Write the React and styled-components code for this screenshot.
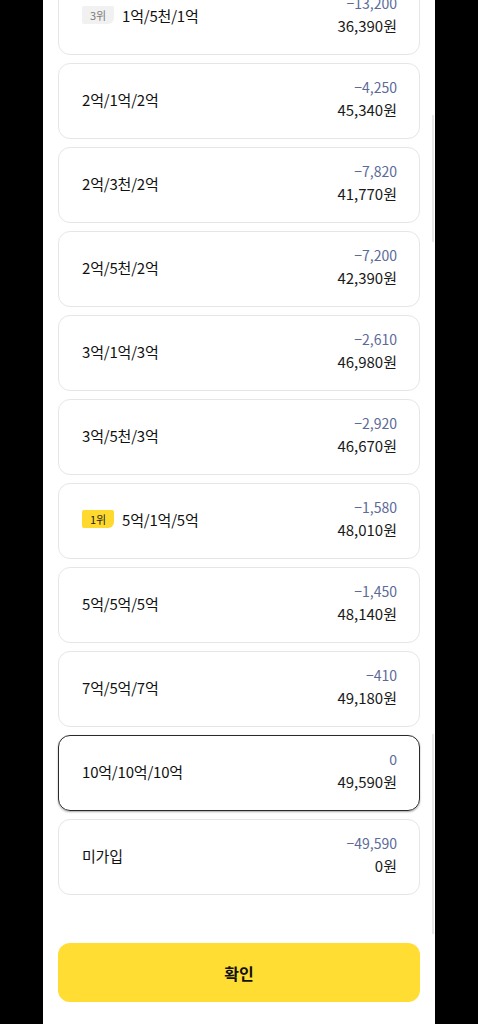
import { createGlobalStyle, styled } from 'styled-components';

const GlobalStyle = createGlobalStyle`
  html, body {
    margin: 0;
    padding: 0;
    background: #000;
  }
  body {
    font-family: "Noto Sans CJK KR", "Noto Sans", sans-serif;
    color: #111;
  }
`;

const plans = [
  { label: '1억/5천/1억', diff: '−13,200', price: '36,390원', rank: 3 },
  { label: '2억/1억/2억', diff: '−4,250', price: '45,340원' },
  { label: '2억/3천/2억', diff: '−7,820', price: '41,770원' },
  { label: '2억/5천/2억', diff: '−7,200', price: '42,390원' },
  { label: '3억/1억/3억', diff: '−2,610', price: '46,980원' },
  { label: '3억/5천/3억', diff: '−2,920', price: '46,670원' },
  { label: '5억/1억/5억', diff: '−1,580', price: '48,010원', rank: 1 },
  { label: '5억/5억/5억', diff: '−1,450', price: '48,140원' },
  { label: '7억/5억/7억', diff: '−410', price: '49,180원' },
  { label: '10억/10억/10억', diff: '0', price: '49,590원', selected: true },
  { label: '미가입', diff: '−49,590', price: '0원' },
];

export default function App() {
  return (
    <>
      <GlobalStyle />
      <Screen>
        <Panel>
          <List>
            {plans.map((p) => (
              <Card key={p.label} $selected={p.selected}>
                <Left>
                  {p.rank && <Badge $top={p.rank === 1}>{p.rank}위</Badge>}
                  <Label>{p.label}</Label>
                </Left>
                <Right>
                  <Diff>{p.diff}</Diff>
                  <Price>{p.price}</Price>
                </Right>
              </Card>
            ))}
          </List>
          <Footer>
            <ConfirmButton>확인</ConfirmButton>
          </Footer>
          <ScrollTrack $top={115} $height={127} />
          <ScrollTrack $top={734} $height={200} />
        </Panel>
      </Screen>
    </>
  );
}

const Screen = styled.div`
  width: 478px;
  height: 1024px;
  overflow: hidden;
  background: #000;
  display: flex;
  justify-content: center;
`;

const Panel = styled.div`
  position: relative;
  width: 392px;
  height: 1024px;
  background: #fff;
  padding: 0 15px;
  box-sizing: border-box;
  display: flex;
  flex-direction: column;
`;

const List = styled.div`
  margin-top: -21px;
  display: flex;
  flex-direction: column;
  gap: 8px;
`;

const Card = styled.div`
  height: 76px;
  box-sizing: border-box;
  border: 1px solid ${(p) => (p.$selected ? '#2a2a2a' : '#e6e6e6')};
  box-shadow: ${(p) => (p.$selected ? '0 1px 2px rgba(0,0,0,0.35)' : 'none')};
  border-radius: 12px;
  padding: 0 22px 0 23px;
  display: flex;
  align-items: center;
  justify-content: space-between;
`;

const Left = styled.div`
  display: flex;
  align-items: center;
  gap: 8px;
  margin-top: -4px;
`;

const Badge = styled.span`
  display: inline-flex;
  align-items: center;
  justify-content: center;
  width: 32px;
  height: 18px;
  font-size: 11px;
  border-radius: 2px 2px 6px 2px;
  background: ${(p) => (p.$top ? '#ffd92e' : '#f1f1f1')};
  color: ${(p) => (p.$top ? '#222' : '#7a7a7a')};
`;

const Label = styled.span`
  font-size: 15px;
  letter-spacing: -0.2px;
  color: #111;
`;

const Right = styled.div`
  display: flex;
  flex-direction: column;
  align-items: flex-end;
  margin-top: -5px;
`;

const Diff = styled.span`
  font-size: 14px;
  line-height: 22px;
  color: #5b6a98;
`;

const Price = styled.span`
  font-size: 15px;
  line-height: 23px;
  color: #1a1a1a;
`;

const Footer = styled.div`
  padding-top: 48px;
`;

const ConfirmButton = styled.button`
  width: 100%;
  height: 59px;
  border: none;
  border-radius: 12px;
  background: #ffdd33;
  font-family: "Noto Sans CJK KR", "Noto Sans", sans-serif;
  font-size: 16px;
  font-weight: 700;
  color: #111;
`;

const ScrollTrack = styled.div`
  position: absolute;
  right: 1px;
  top: ${(p) => p.$top}px;
  width: 2px;
  height: ${(p) => p.$height}px;
  background: #e8e8e8;
`;
